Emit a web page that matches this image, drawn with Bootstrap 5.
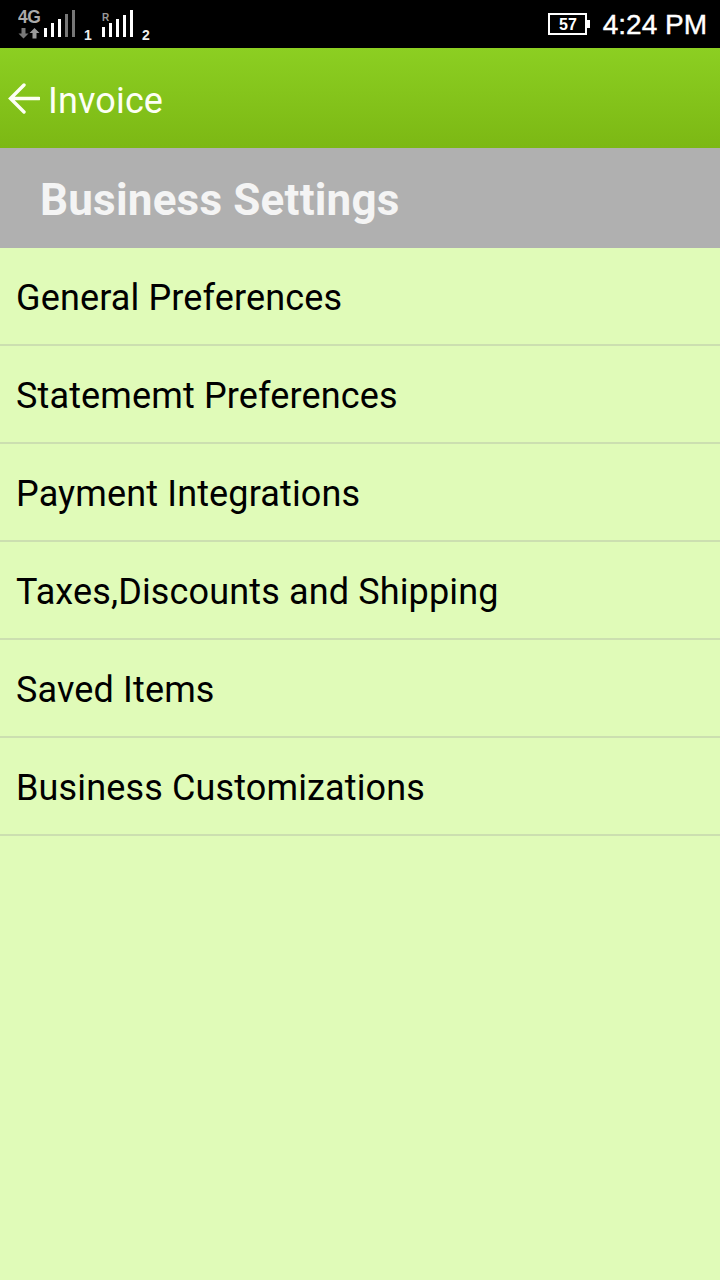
<!DOCTYPE html>
<html lang="en">
<head>
<meta charset="utf-8">
<link href="https://cdn.jsdelivr.net/npm/bootstrap@5.3.0/dist/css/bootstrap.min.css" rel="stylesheet">
<style>
html,body{height:100%}
body{background:#e0fbb8;font-family:Roboto,sans-serif;width:720px;height:1280px;overflow:hidden}
.status-strip{height:48px;background:#000;color:#fff}
.sim-icons{margin-left:18px;margin-top:3px}
.clock{font:400 28px/1 "Liberation Sans",sans-serif;color:#fff;margin-right:13px;margin-top:11px;-webkit-text-stroke:.4px #fff}
.batt{margin-right:13px;margin-top:13px}
.batt-num{font:700 16px/1 "Liberation Sans",sans-serif;fill:#fff}
.app-strip{height:100px;background:linear-gradient(#8ccf22,#7cb814);color:#fff;padding-left:8px}
.app-title{font-size:36px;line-height:1;margin-left:8px;font-weight:400;color:#fdfff5;margin-top:5px;letter-spacing:.15px}
.section-strip{height:100px;background:#b0b0b0;padding-left:40px}
.section-title{font-size:44px;font-weight:700;color:#f4f4f4;line-height:1;margin:4px 0 0;letter-spacing:.2px}
.set-list{background:transparent;border-radius:0}
.set-list .list-group-item{background:transparent;height:98px;padding:4px 16px 0;border:0;border-bottom:2px solid #ccdfb0;font-size:36px;color:#000;line-height:92px;letter-spacing:.14px}
</style>
</head>
<body>
<div class="status-strip d-flex justify-content-between">
  <div class="sim-icons d-flex">
    <svg width="140" height="42" viewBox="0 -6 140 42" aria-hidden="true">
      <path d="M3.500 19h4v5.500h3l-5 5-5-5h3z" fill="#777"/>
      <path d="M14.500 29.500h4v-5.500h3l-5-5-5 5h3z" fill="#999"/>
      <g fill="#fff">
        <rect x="26" y="19" width="3" height="9"/><rect x="33" y="14" width="3" height="14"/><rect x="40" y="10" width="3" height="18"/>
      </g>
      <rect x="47" y="5" width="3" height="23" fill="#777"/>
      <rect x="54" y="1" width="3" height="27" fill="#777"/>
      <g fill="#fff">
        <rect x="84" y="18" width="3" height="10"/><rect x="91" y="14" width="3" height="14"/><rect x="98" y="10" width="3" height="18"/><rect x="105" y="6" width="3" height="22"/><rect x="112" y="1" width="3" height="27"/>
      </g>
      <text x="0" y="14" fill="#aaa" font-family="Liberation Sans" font-weight="700" font-size="17.500" letter-spacing="-.5">4G</text>
      <text x="84" y="12" fill="#999" font-family="Liberation Sans" font-weight="700" font-size="10">R</text>
      <text x="66" y="31" fill="#eee" font-family="Liberation Sans" font-weight="700" font-size="14">1</text>
      <text x="124" y="31" fill="#eee" font-family="Liberation Sans" font-weight="700" font-size="14">2</text>
    </svg>
  </div>
  <div class="d-flex align-items-start">
    <svg class="batt" width="42" height="22" viewBox="0 0 42 22" aria-hidden="true">
      <rect x="1" y="1" width="37" height="20" fill="#000" stroke="#fff" stroke-width="2"/>
      <rect x="39" y="7" width="3" height="8" fill="#fff"/>
      <text x="20" y="17" text-anchor="middle" class="batt-num">57</text>
    </svg>
    <div class="clock">4:24 PM</div>
  </div>
</div>
<div class="app-strip d-flex align-items-center">
  <svg width="32" height="33" viewBox="0 0 32 33" aria-hidden="true" class="flex-shrink-0">
    <path d="M31 16.500H3M16 3 2.500 16.500 16 30" fill="none" stroke="#fdfff5" stroke-width="3.400" stroke-linecap="round"/>
  </svg>
  <div class="app-title">Invoice</div>
</div>
<div class="section-strip d-flex align-items-center">
  <h1 class="section-title">Business Settings</h1>
</div>
<ul class="list-group set-list">
  <li class="list-group-item">General Preferences</li>
  <li class="list-group-item">Statememt Preferences</li>
  <li class="list-group-item">Payment Integrations</li>
  <li class="list-group-item">Taxes,Discounts and Shipping</li>
  <li class="list-group-item">Saved Items</li>
  <li class="list-group-item">Business Customizations</li>
</ul>
<script src="https://cdn.jsdelivr.net/npm/bootstrap@5.3.0/dist/js/bootstrap.bundle.min.js"></script>
</body>
</html>
